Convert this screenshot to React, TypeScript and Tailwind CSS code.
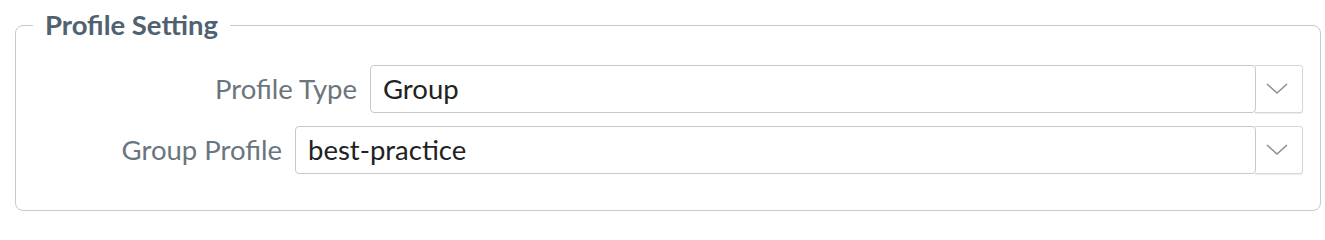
import React from 'react';

function Chevron() {
  return (
    <svg width="22" height="12" viewBox="0 0 22 12" fill="none">
      <polyline points="1,1 11,10 21,1" stroke="#8a9096" strokeWidth="1.6" />
    </svg>
  );
}

function SelectBox({ value, width }: { value: string; width: string }) {
  return (
    <div className={`flex h-[48px] ${width}`}>
      <div className="flex-1 flex items-center border border-[#c6cacd] rounded-[4px] pl-[12px] text-[27.5px] text-[#222] bg-white relative z-10">
        {value}
      </div>
      <div className="w-[48px] -ml-[1px] flex items-center justify-center pr-[4px] border border-l-0 border-[#d5d8db] rounded-r-[3px] shadow-[0_1px_1px_rgba(0,0,0,0.08)] bg-white">
        <Chevron />
      </div>
    </div>
  );
}

export default function App() {
  return (
    <div className="bg-white w-[1325px] h-[217px] pl-[15px] pr-[4px] pt-[8px] font-['Lato','Liberation_Sans',sans-serif]">
      <fieldset className="border border-[#c8cbce] rounded-[8px] px-[17px] pb-[36px] pt-[23px]">
        <legend className="px-[12px] text-[27.5px] leading-[34px] font-bold text-[#506170]">
          Profile Setting
        </legend>
        <div className="flex flex-col gap-[13px]">
          <div className="flex items-center justify-end">
            <label className="text-[27.5px] text-[#6b757d] mr-[13px]">Profile Type</label>
            <SelectBox value="Group" width="w-[933px]" />
          </div>
          <div className="flex items-center justify-end">
            <label className="text-[27.5px] text-[#6b757d] mr-[13px]">Group Profile</label>
            <SelectBox value="best-practice" width="w-[1008px]" />
          </div>
        </div>
      </fieldset>
    </div>
  );
}
